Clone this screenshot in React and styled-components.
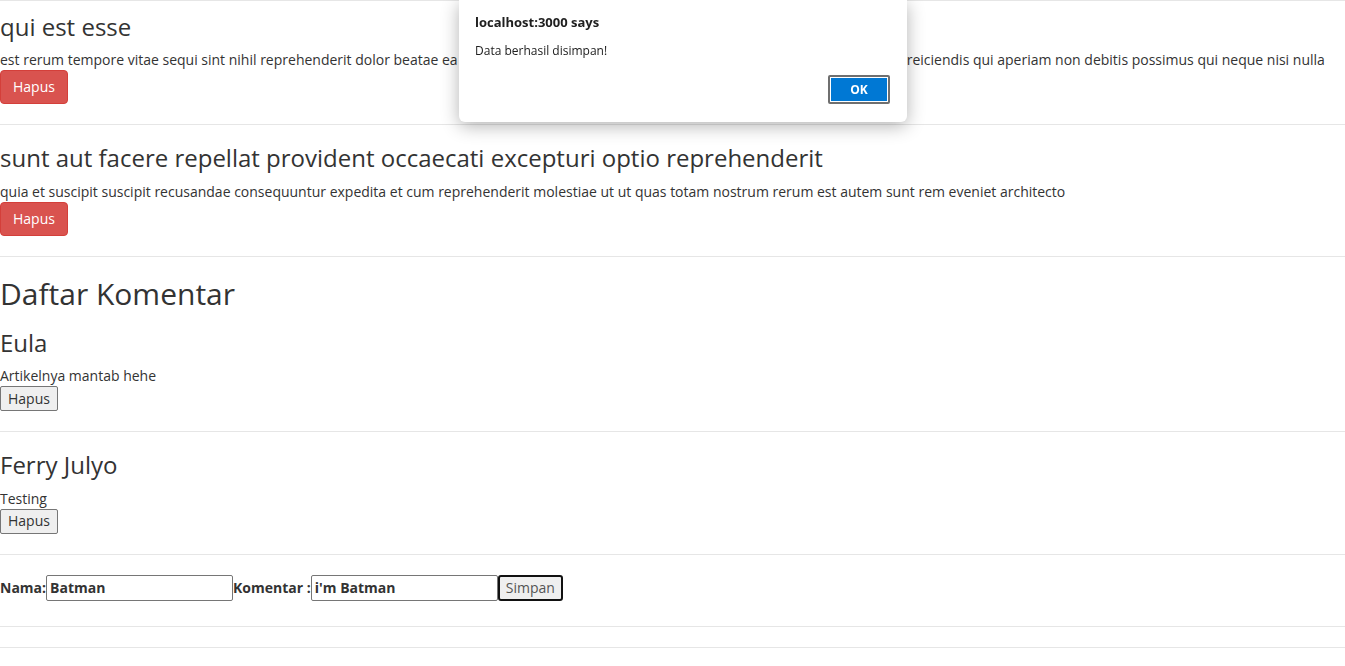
import React from "react";
import styled, { createGlobalStyle } from "styled-components";

const posts = [
	{
		id: 2,
		title: "qui est esse",
		body: "est rerum tempore vitae sequi sint nihil reprehenderit dolor beatae ea dolores neque fugiat blanditiis voluptate porro vel nihil molestiae ut reiciendis qui aperiam non debitis possimus qui neque nisi nulla",
	},
	{
		id: 1,
		title: "sunt aut facere repellat provident occaecati excepturi optio reprehenderit",
		body: "quia et suscipit suscipit recusandae consequuntur expedita et cum reprehenderit molestiae ut ut quas totam nostrum rerum est autem sunt rem eveniet architecto",
	},
];

const comments = [
	{ id: 1, nama: "Eula", komentar: "Artikelnya mantab hehe" },
	{ id: 2, nama: "Ferry Julyo", komentar: "Testing" },
];

function App() {
	return (
		<>
			<GlobalStyle />
			<Page>
				<Divider $flush />
				{posts.map((post, i) => (
					<React.Fragment key={post.id}>
						<ItemTitle $first={i === 0}>{post.title}</ItemTitle>
						<Text>{post.body}</Text>
						<DangerButton>Hapus</DangerButton>
						<Divider />
					</React.Fragment>
				))}

				<SectionTitle>Daftar Komentar</SectionTitle>
				{comments.map((c) => (
					<React.Fragment key={c.id}>
						<ItemTitle>{c.nama}</ItemTitle>
						<Text>{c.komentar}</Text>
						<PlainButton>Hapus</PlainButton>
						<Divider />
					</React.Fragment>
				))}

				<CommentForm onSubmit={(e) => e.preventDefault()}>
					<Label>
						Nama:
						<Field type="text" defaultValue="Batman" />
					</Label>
					<Label>
						Komentar :
						<Field type="text" defaultValue="i'm Batman" />
					</Label>
					<SubmitButton type="submit">Simpan</SubmitButton>
				</CommentForm>
				<Divider />
				<Divider />
			</Page>

			<Alert>
				<AlertTitle>localhost:3000 says</AlertTitle>
				<AlertMessage>Data berhasil disimpan!</AlertMessage>
				<AlertActions>
					<OkButton>OK</OkButton>
				</AlertActions>
			</Alert>
		</>
	);
}

const GlobalStyle = createGlobalStyle`
	* { box-sizing: border-box; }
	body {
		margin: 0;
		background: #fff;
		color: #333;
		font-family: "Open Sans", "Liberation Sans", sans-serif;
		font-size: 14px;
		line-height: 20px;
	}
`;

const Page = styled.div`
	display: flow-root;
`;

const Divider = styled.hr`
	margin: ${(p) => (p.$flush ? "0" : "20px 0")};
	border: 0;
	border-top: 1px solid #e6e6e6;
	height: 0;
`;

const ItemTitle = styled.h3`
	margin: ${(p) => (p.$first ? "13px" : "20px")} 0 10px;
	font-size: 24px;
	font-weight: 400;
	line-height: 26.4px;
`;

const SectionTitle = styled.h2`
	margin: 20px 0 10px;
	font-size: 30px;
	font-weight: 400;
	line-height: 33px;
`;

const Text = styled.p`
	margin: 0;
`;

const DangerButton = styled.button`
	display: block;
	height: 34px;
	padding: 6px 12px;
	font: inherit;
	line-height: 20px;
	color: #fff;
	background: #d9534f;
	border: 1px solid #d43f3a;
	border-radius: 4px;
`;

const PlainButton = styled.button`
	display: block;
	height: 25px;
	padding: 1px 7px;
	font: inherit;
	line-height: 20px;
	color: #333;
	background: #efefef;
	border: 1px solid #767676;
	border-radius: 2px;
`;

const CommentForm = styled.form`
	display: flex;
	align-items: center;
	height: 26px;
	margin: 20px 0 25px;
`;

const Label = styled.label`
	display: flex;
	align-items: center;
	font-weight: 700;
`;

const Field = styled.input`
	width: 187px;
	height: 26px;
	padding: 2px 3px;
	font: inherit;
	font-weight: 700;
	color: #333;
	border: 1px solid #767676;
	border-radius: 2px;
`;

const SubmitButton = styled.button`
	width: 65px;
	height: 26px;
	padding: 0 6px;
	font: inherit;
	color: #555;
	background: #efefef;
	border: 2px solid #111;
	border-radius: 3px;
`;

const Alert = styled.div`
	position: fixed;
	top: 0;
	left: 459px;
	width: 448px;
	padding: 13px 17px 18px 16px;
	background: #fff;
	border-radius: 0 0 6px 6px;
	box-shadow: 0 4px 18px rgba(0, 0, 0, 0.3);
	color: #202020;
	font-family: "Open Sans", "Liberation Sans", sans-serif;
`;

const AlertTitle = styled.div`
	font-size: 13px;
	font-weight: 700;
	line-height: 18px;
`;

const AlertMessage = styled.div`
	margin-top: 11px;
	font-size: 12px;
	line-height: 17px;
`;

const AlertActions = styled.div`
	display: flex;
	justify-content: flex-end;
	margin-top: 16px;
`;

const OkButton = styled.button`
	width: 62px;
	height: 29px;
	padding: 0;
	font-family: inherit;
	font-size: 12px;
	font-weight: 700;
	color: #fff;
	background: #0078d4;
	border: 2px solid #6f6f6f;
	border-radius: 2px;
	box-shadow: inset 0 0 0 1px #fff;
`;

export default App;
